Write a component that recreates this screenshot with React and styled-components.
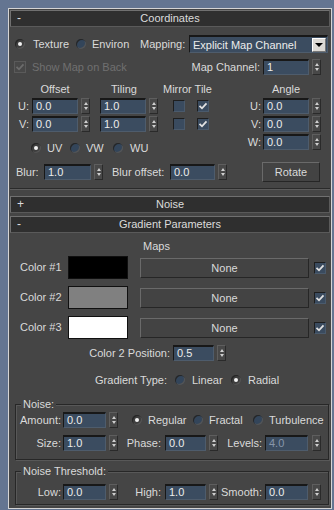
import React from 'react';
import styled, { createGlobalStyle } from 'styled-components';

const GlobalStyle = createGlobalStyle`
  html, body { margin: 0; padding: 0; background: #647591; }
  body { font-family: "Liberation Sans", Arial, sans-serif; font-size: 11px; color: #dadada; }
  * { box-sizing: border-box; }
`;

const Frame = styled.div`
  margin: 8px 0 0 8px;
  width: 324px;
  height: 501px;
  background: #454545;
  border: 1px solid #d4d4d4;
  padding: 1px 1px 0 1px;
  display: flex;
  flex-direction: column;
  overflow: hidden;
`;

const RolloutHeader = styled.div`
  height: 17px;
  margin-top: ${p => p.$mt || 0}px;
  background: #2f2f2f;
  border: 1px solid #707070;
  border-right-color: #5a5a5a;
  border-bottom-color: #5a5a5a;
  display: grid;
  grid-template-columns: 20px 1fr 20px;
  align-items: center;
  line-height: 13px;
  color: #dcdcdc;
`;

const Sign = styled.span`
  padding-left: 6px;
  font-size: 12px;
`;

const Title = styled.span`
  text-align: center;
`;

const Body = styled.div`
  display: flex;
  flex-direction: column;
  padding-bottom: ${p => p.$pb || 0}px;
  border-bottom: ${p => (p.$line ? '1px solid #2a2a2a' : 'none')};
  box-shadow: ${p => (p.$line ? '0 1px 0 #5c5c5c' : 'none')};
`;

const Row = styled.div`
  display: flex;
  align-items: center;
  height: ${p => p.$h || 16}px;
  margin-top: ${p => p.$mt || 0}px;
  padding-left: ${p => p.$pl || 0}px;
`;

const Text = styled.span`
  display: inline-block;
  flex: none;
  width: ${p => (p.$w ? `${p.$w}px` : 'auto')};
  text-align: ${p => p.$align || 'left'};
  margin-left: ${p => p.$ml || 0}px;
  margin-right: ${p => p.$mr || 0}px;
  color: ${p => (p.$dim ? '#707070' : '#dadada')};
  white-space: nowrap;
  line-height: 13px;
`;

const RadioOpt = styled.label`
  display: flex;
  align-items: center;
  flex: none;
  width: ${p => (p.$w ? `${p.$w}px` : 'auto')};
  margin-left: ${p => p.$ml || 0}px;
  gap: ${p => p.$gap || 6}px;
  line-height: 13px;
`;

const RadioDot = styled.span`
  width: 10px;
  height: 10px;
  flex: none;
  border-radius: 50%;
  background: ${p => (p.$on ? '#3e3e3e' : '#33455a')};
  box-shadow: inset 1px 1px 0 #262626, inset -1px -1px 0 #555;
  display: flex;
  align-items: center;
  justify-content: center;
  &::after {
    content: '';
    width: 4px;
    height: 4px;
    border-radius: 50%;
    background: #f2f2f2;
    display: ${p => (p.$on ? 'block' : 'none')};
  }
`;

const Radio = ({ on, children, w, ml, gap }) => (
  <RadioOpt $w={w} $ml={ml} $gap={gap}>
    <RadioDot $on={on} />
    <span>{children}</span>
  </RadioOpt>
);

const CheckBox = styled.span`
  width: 12px;
  height: 12px;
  flex: none;
  margin-left: ${p => p.$ml || 0}px;
  background: ${p => (p.$disabled ? '#484848' : '#3a4b5f')};
  border-top: 1px solid ${p => (p.$disabled ? '#5a5a5a' : '#1e1e1e')};
  border-left: 1px solid ${p => (p.$disabled ? '#5a5a5a' : '#1e1e1e')};
  border-right: 1px solid ${p => (p.$disabled ? '#5a5a5a' : '#4a5a6c')};
  border-bottom: 1px solid ${p => (p.$disabled ? '#5a5a5a' : '#4a5a6c')};
  display: flex;
  align-items: center;
  justify-content: center;
`;

const Check = ({ on = true, disabled, ml }) => (
  <CheckBox $disabled={disabled} $ml={ml}>
    {on && (
      <svg width="10" height="10" viewBox="0 0 10 10">
        <path d="M1.5 4.8 L4 7.3 L8.5 2.3" fill="none" stroke={disabled ? '#6c6c6c' : '#e2e2e2'} strokeWidth="1.8" />
      </svg>
    )}
  </CheckBox>
);

const SpinWrap = styled.div`
  display: flex;
  align-items: center;
  flex: none;
  height: 16px;
  margin-left: ${p => p.$ml || 0}px;
`;

const Field = styled.div`
  width: ${p => p.$w}px;
  height: 16px;
  background: #3b4c60;
  border-top: 2px solid #181818;
  border-left: 1px solid #181818;
  border-bottom: 1px solid #4e5c6c;
  border-right: 1px solid #4e5c6c;
  color: ${p => (p.$disabled ? '#8796aa' : '#ececec')};
  padding-left: 3px;
  line-height: 12px;
`;

const Arrows = styled.div`
  width: 9px;
  height: 16px;
  margin-left: ${p => p.$gap}px;
  background: #484848;
  border: 1px solid #2a2a2a;
  border-top-color: #5e5e5e;
  border-left-color: #5e5e5e;
  display: flex;
  flex-direction: column;
  align-items: center;
  justify-content: center;
  gap: 2px;
`;

const Tri = styled.span`
  width: 0;
  height: 0;
  border-left: 2.5px solid transparent;
  border-right: 2.5px solid transparent;
  ${p => (p.$up ? 'border-bottom: 3px solid #cfcfcf;' : 'border-top: 3px solid #cfcfcf;')}
`;

const Spinner = ({ value, w = 46, gap = 3, ml, disabled }) => (
  <SpinWrap $ml={ml}>
    <Field $w={w} $disabled={disabled}>{value}</Field>
    <Arrows $gap={gap}>
      <Tri $up />
      <Tri />
    </Arrows>
  </SpinWrap>
);

const Dropdown = styled.div`
  width: 139px;
  height: 18px;
  flex: none;
  background: #3b4c60;
  border-top: 2px solid #181818;
  border-left: 1px solid #181818;
  border-right: 1px solid #4e5c6c;
  border-bottom: 1px solid #4e5c6c;
  display: flex;
  align-items: center;
  justify-content: space-between;
  padding-left: 3px;
  color: #ececec;
`;

const DropButton = styled.span`
  width: 14px;
  height: 14px;
  margin-right: 1px;
  background: #dcd9d4;
  border: 1px solid #fff;
  border-right-color: #777;
  border-bottom-color: #777;
  display: flex;
  align-items: center;
  justify-content: center;
  &::after {
    content: '';
    border-left: 4px solid transparent;
    border-right: 4px solid transparent;
    border-top: 4px solid #000;
  }
`;

const Button = styled.div`
  width: ${p => p.$w}px;
  height: 20px;
  flex: none;
  margin-left: ${p => p.$ml || 0}px;
  background: #434343;
  border: 1px solid #262626;
  border-top-color: #6a6a6a;
  border-left-color: #6a6a6a;
  display: flex;
  align-items: center;
  justify-content: center;
  color: #dadada;
`;

const Swatch = styled.div`
  width: 60px;
  height: 23px;
  flex: none;
  background: ${p => p.$color};
  border: 1px solid #101010;
`;

const Table = styled.div`
  display: flex;
  margin-top: ${p => p.$mt || 0}px;
`;

const LeftCol = styled.div`
  width: 220px;
  display: flex;
  flex-direction: column;
`;

const Grid = styled.div`
  display: grid;
  grid-template-columns: 22px 68px 68px 22px 26px;
  grid-template-rows: 14px 16px 16px;
  row-gap: 2px;
  align-items: center;
`;

const Cell = styled.div`
  grid-column: ${p => p.$col || 'auto'};
  display: flex;
  align-items: center;
  justify-content: ${p => p.$justify || 'flex-start'};
  margin-left: ${p => p.$ml || 0}px;
  padding-left: ${p => p.$pl || 0}px;
  padding-right: ${p => p.$pr || 0}px;
  line-height: 13px;
  white-space: nowrap;
`;

const RightCol = styled.div`
  width: 99px;
  display: flex;
  flex-direction: column;
  gap: 2px;
`;

const Group = styled.div`
  position: relative;
  margin: ${p => p.$mt || 0}px 1px 0 5px;
  padding: ${p => p.$pt}px 0 ${p => p.$pb}px 0;
  border: 1px solid #272727;
  box-shadow: inset 1px 1px 0 #585858, 1px 1px 0 #585858;
  display: flex;
  flex-direction: column;
`;

const Legend = styled.span`
  position: absolute;
  top: -7px;
  left: 5px;
  padding: 0 2px;
  background: #454545;
  line-height: 13px;
`;

export default function App() {
  return (
    <>
      <GlobalStyle />
      <Frame>
        <RolloutHeader>
          <Sign>-</Sign>
          <Title>Coordinates</Title>
          <span />
        </RolloutHeader>
        <Body $pb={6} $line>
          <Row $mt={8} $h={18} $pl={5}>
            <Radio on w={61} gap={8}>Texture</Radio>
            <Radio w={64} gap={6}>Environ</Radio>
            <Text $w={49}>Mapping:</Text>
            <Dropdown>
              <span>Explicit Map Channel</span>
              <DropButton />
            </Dropdown>
          </Row>
          <Row $mt={6} $h={16} $pl={4}>
            <Check disabled />
            <Text $dim $w={140} $ml={6}>Show Map on Back</Text>
            <Text $w={88} $align="right" $mr={3}>Map Channel:</Text>
            <Spinner value="1" />
          </Row>
          <Table $mt={7}>
            <LeftCol>
              <Grid>
                <span />
                <Cell $justify="center" $pr={22}>Offset</Cell>
                <Cell $justify="center" $pr={20}>Tiling</Cell>
                <Cell $col="span 2" $ml={-5}>Mirror Tile</Cell>
                <Cell $justify="flex-end" $pr={3}>U:</Cell>
                <Cell><Spinner value="0.0" /></Cell>
                <Cell><Spinner value="1.0" /></Cell>
                <Cell $pl={5}><Check on={false} /></Cell>
                <Cell $pl={7}><Check /></Cell>
                <Cell $justify="flex-end" $pr={3}>V:</Cell>
                <Cell><Spinner value="0.0" /></Cell>
                <Cell><Spinner value="1.0" /></Cell>
                <Cell $pl={5}><Check on={false} /></Cell>
                <Cell $pl={7}><Check /></Cell>
              </Grid>
              <Row $mt={11} $h={10} $pl={21}>
                <Radio on w={39} gap={6}>UV</Radio>
                <Radio w={43} gap={6}>VW</Radio>
                <Radio gap={7}>WU</Radio>
              </Row>
            </LeftCol>
            <RightCol>
              <Row $h={14} $pl={33}>
                <Text $w={46} $align="center">Angle</Text>
              </Row>
              <Row>
                <Text $w={31} $align="right" $mr={2}>U:</Text>
                <Spinner value="0.0" />
              </Row>
              <Row>
                <Text $w={31} $align="right" $mr={2}>V:</Text>
                <Spinner value="0.0" />
              </Row>
              <Row>
                <Text $w={31} $align="right" $mr={2}>W:</Text>
                <Spinner value="0.0" />
              </Row>
            </RightCol>
          </Table>
          <Row $mt={9} $h={20} $pl={6}>
            <Text $w={28}>Blur:</Text>
            <Spinner value="1.0" w={47} />
            <Text $w={58} $ml={9}>Blur offset:</Text>
            <Spinner value="0.0" w={45} />
            <Button $w={58} $ml={35}>Rotate</Button>
          </Row>
        </Body>

        <RolloutHeader $mt={7}>
          <Sign>+</Sign>
          <Title>Noise</Title>
          <span />
        </RolloutHeader>

        <RolloutHeader $mt={3}>
          <Sign>-</Sign>
          <Title>Gradient Parameters</Title>
          <span />
        </RolloutHeader>
        <Body>
          <Row $mt={7} $h={12} $pl={133}>
            <Text>Maps</Text>
          </Row>
          {[
            ['Color #1', '#000000'],
            ['Color #2', '#808080'],
            ['Color #3', '#ffffff'],
          ].map(([label, color], i) => (
            <Row key={label} $mt={i === 0 ? 4 : 7} $h={23} $pl={10}>
              <Text $w={48}>{label}</Text>
              <Swatch $color={color} />
              <Button $w={169} $ml={12}>None</Button>
              <Check ml={5} />
            </Row>
          ))}
          <Row $mt={6} $h={16}>
            <Text $w={160} $align="right" $mr={3}>Color 2 Position:</Text>
            <Spinner value="0.5" w={41} />
          </Row>
          <Row $mt={13} $h={12}>
            <Text $w={157} $align="right">Gradient Type:</Text>
            <Radio w={56} ml={8} gap={7}>Linear</Radio>
            <Radio on gap={7}>Radial</Radio>
          </Row>
          <Group $mt={18} $pt={7} $pb={8}>
            <Legend>Noise:</Legend>
            <Row>
              <Text $w={45} $align="right" $mr={2}>Amount:</Text>
              <Spinner value="0.0" w={43} />
              <Radio on w={61} ml={14} gap={6}>Regular</Radio>
              <Radio w={60} gap={6}>Fractal</Radio>
              <Radio gap={6}>Turbulence</Radio>
            </Row>
            <Row $mt={7}>
              <Text $w={45} $align="right" $mr={2}>Size:</Text>
              <Spinner value="1.0" w={43} />
              <Text $w={43} $align="right" $mr={4}>Phase:</Text>
              <Spinner value="0.0" w={41} />
              <Text $w={44} $align="right" $mr={3}>Levels:</Text>
              <Spinner value="4.0" w={43} gap={4} disabled />
            </Row>
          </Group>
          <Group $mt={11} $pt={12} $pb={4}>
            <Legend>Noise Threshold:</Legend>
            <Row>
              <Text $w={45} $align="right" $mr={2}>Low:</Text>
              <Spinner value="0.0" w={43} />
              <Text $w={43} $align="right" $mr={4}>High:</Text>
              <Spinner value="1.0" w={41} />
              <Text $w={44} $align="right" $mr={3}>Smooth:</Text>
              <Spinner value="0.0" w={43} gap={4} />
            </Row>
          </Group>
        </Body>
      </Frame>
    </>
  );
}
